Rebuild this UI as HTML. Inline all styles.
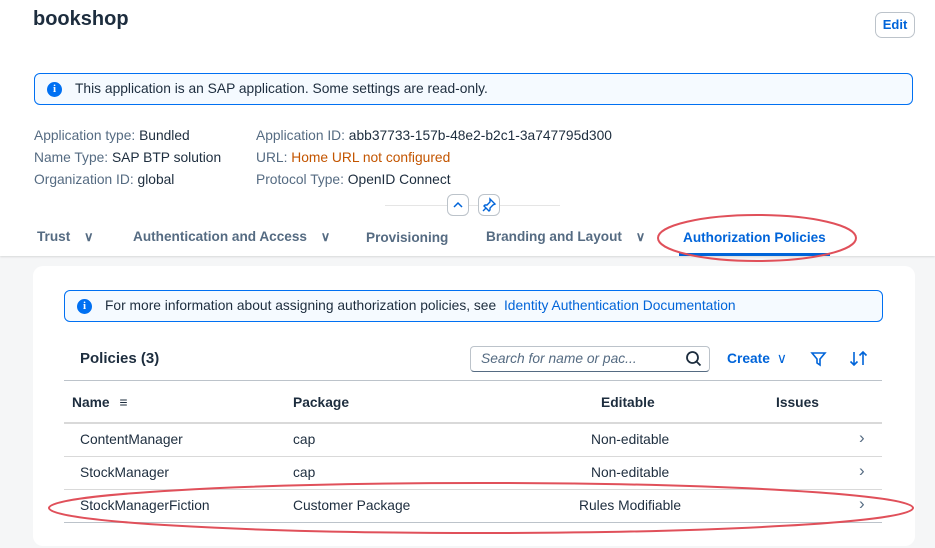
<!DOCTYPE html>
<html><head><style>
*{margin:0;padding:0;box-sizing:border-box}
body{width:935px;height:548px;overflow:hidden;background:#f5f6f7;font-family:"Liberation Sans",sans-serif;color:#1d2d3e;position:relative;font-size:13.8px}
.a{position:absolute;white-space:nowrap}
.hdr{position:absolute;left:0;top:0;width:935px;height:256px;background:#fff;box-shadow:0 1px 2px rgba(0,0,0,.12)}
.lbl{color:#556b82}
.info{position:absolute;border:1px solid #0070f2;background:#f5faff;border-radius:6px}
.ic{position:absolute;width:15px;height:15px;border-radius:50%;background:#0070f2;color:#fff;font-weight:bold;font-size:11px;text-align:center;line-height:15px;font-family:"Liberation Serif",serif}
.tab{position:absolute;top:229px;font-weight:bold;color:#556b82;font-size:13.6px}
.card{position:absolute;left:33px;top:266px;width:882px;height:280px;background:#fff;border-radius:10px}
.hl{position:absolute;left:64px;width:818px;height:1px;background:#d9d9d9}
.chev{color:#556b82;font-size:13px}
.rc{color:#556b82;font-size:17px}
</style></head><body>
<div class="hdr"></div>
<div class="a" style="left:33px;top:8px;font-size:20px;font-weight:bold;">bookshop</div>
<div class="a" style="left:875px;top:12px;width:40px;height:26px;border:1px solid #bcc3ca;border-radius:7px;color:#0064d9;font-size:13px;text-align:center;line-height:24px;font-weight:bold">Edit</div>
<div class="info" style="left:34px;top:73px;width:879px;height:32px"></div>
<div class="ic" style="left:47px;top:82px">i</div>
<div class="a" style="left:75px;top:81px">This application is an SAP application. Some settings are read-only.</div>
<div class="a" style="left:34px;top:125px;line-height:22px"><span class="lbl">Application type:</span> Bundled<br><span class="lbl">Name Type:</span> SAP BTP solution<br><span class="lbl">Organization ID:</span> global</div>
<div class="a" style="left:256px;top:125px;line-height:22px"><span class="lbl">Application ID:</span> abb37733-157b-48e2-b2c1-3a747795d300<br><span class="lbl">URL:</span> <span style="color:#c35500">Home URL not configured</span><br><span class="lbl">Protocol Type:</span> OpenID Connect</div>
<div class="a" style="left:385px;top:205px;width:175px;height:1px;background:#e5e5e5"></div>
<div class="a" style="left:447px;top:194px;width:22px;height:22px;border:1px solid #bcc3ca;border-radius:6px;background:#fff"><svg width="20" height="20"><path d="M6 12l4-4 4 4" fill="none" stroke="#0064d9" stroke-width="1.5"/></svg></div>
<div class="a" style="left:478px;top:194px;width:22px;height:22px;border:1px solid #bcc3ca;border-radius:6px;background:#fff"><svg width="20" height="20"><path d="M11 4l5 5-2 1-3 3v2l-1 1-5-5 1-1h2l3-3zM7 13l-3 3" fill="none" stroke="#0064d9" stroke-width="1.4"/></svg></div>
<div class="tab" style="left:37px">Trust <span class="chev" style="margin-left:10px">∨</span></div>
<div class="tab" style="left:133px">Authentication and Access <span class="chev" style="margin-left:10px">∨</span></div>
<div class="tab" style="left:366px;top:230px">Provisioning</div>
<div class="tab" style="left:486px">Branding and Layout <span class="chev" style="margin-left:10px">∨</span></div>
<div class="tab" style="left:683px;top:230px;color:#0064d9">Authorization Policies</div>
<div class="a" style="left:679px;top:253px;width:151px;height:3px;background:#0064d9"></div>
<svg class="a" style="left:655px;top:212px" width="205" height="55"><ellipse cx="102" cy="26" rx="99" ry="23" fill="none" stroke="#e0505a" stroke-width="2"/></svg>
<div class="card"></div>
<div class="info" style="left:64px;top:290px;width:819px;height:32px"></div>
<div class="ic" style="left:77px;top:299px">i</div>
<div class="a" style="left:105px;top:298px">For more information about assigning authorization policies, see <span style="color:#0064d9;margin-left:4px">Identity Authentication Documentation</span></div>
<div class="a" style="left:80px;top:350px;font-size:15px;font-weight:bold">Policies (3)</div>
<div class="a" style="left:470px;top:346px;width:240px;height:26px;border:1px solid #bcc3ca;border-bottom-color:#556b82;border-radius:4px"></div>
<div class="a" style="left:481px;top:351px;font-style:italic;color:#556b82">Search for name or pac...</div>
<svg class="a" style="left:685px;top:350px" width="18" height="18"><circle cx="7.5" cy="7.5" r="5.5" fill="none" stroke="#1d2d3e" stroke-width="1.8"/><path d="M11.5 11.5l4 4" stroke="#1d2d3e" stroke-width="1.8"/></svg>
<div class="a" style="left:727px;top:351px;color:#0064d9;font-weight:bold">Create <span style="font-weight:normal;margin-left:3px">∨</span></div>
<svg class="a" style="left:810px;top:350px" width="18" height="18"><path d="M2 3h13l-5 6v6l-3-2V9z" fill="none" stroke="#0064d9" stroke-width="1.6"/></svg>
<svg class="a" style="left:849px;top:349px" width="20" height="20"><path d="M5 3v13M1.5 12.5L5 16l3.5-3.5M14 16V3M10.5 6.5L14 3l3.5 3.5" fill="none" stroke="#0064d9" stroke-width="1.6"/></svg>
<div class="hl" style="top:380px;background:#bcc3ca"></div>
<div class="a" style="left:72px;top:395px;font-weight:bold">Name <span style="font-weight:normal;margin-left:6px">≡</span></div>
<div class="a" style="left:293px;top:395px;font-weight:bold">Package</div>
<div class="a" style="left:601px;top:395px;font-weight:bold">Editable</div>
<div class="a" style="left:776px;top:395px;font-weight:bold">Issues</div>
<div class="hl" style="top:422px;height:2px"></div>
<div class="a" style="left:80px;top:432px">ContentManager</div><div class="a" style="left:293px;top:432px">cap</div><div class="a" style="left:591px;top:432px">Non-editable</div><div class="a rc" style="left:859px;top:428px">›</div>
<div class="hl" style="top:456px"></div>
<div class="a" style="left:80px;top:465px">StockManager</div><div class="a" style="left:293px;top:465px">cap</div><div class="a" style="left:591px;top:465px">Non-editable</div><div class="a rc" style="left:859px;top:461px">›</div>
<div class="hl" style="top:489px"></div>
<div class="a" style="left:80px;top:498px">StockManagerFiction</div><div class="a" style="left:293px;top:498px">Customer Package</div><div class="a" style="left:579px;top:498px">Rules Modifiable</div><div class="a rc" style="left:859px;top:494px">›</div>
<div class="hl" style="top:522px;background:#bcc3ca"></div>
<svg class="a" style="left:45px;top:478px" width="875" height="60"><ellipse cx="436" cy="30" rx="432" ry="25" fill="none" stroke="#e0505a" stroke-width="2"/></svg>
</body></html>
